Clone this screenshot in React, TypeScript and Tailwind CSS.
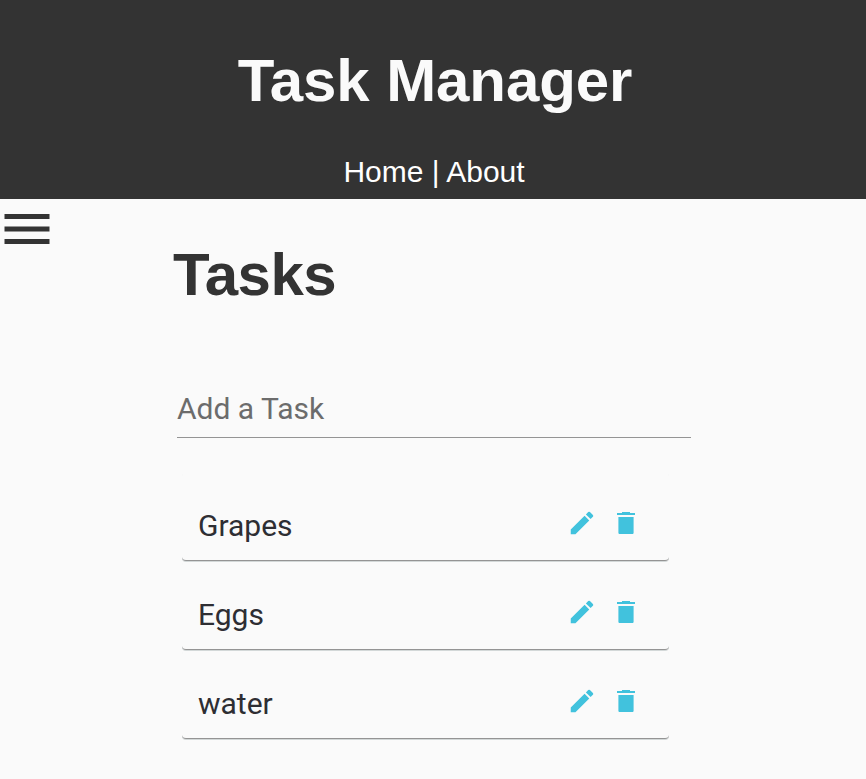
import { MdEdit, MdMenu } from "react-icons/md";

const tasks = ["Grapes", "Eggs", "water"];

function TrashIcon() {
  return (
    <svg viewBox="0 0 30 30" className="mr-[28px] mb-[5px] size-[30px]" fill="#41c2dd" aria-hidden="true">
      <path d="M11 4h8v1h5v2H6V5h5z" />
      <path d="M7.4 9h15.2v16.2l-.8.8H8.2l-.8-.8z" />
    </svg>
  );
}

export default function App() {
  return (
    <div className="h-[779px] overflow-hidden bg-[#fafafa] font-['Liberation_Sans',Arial,sans-serif] text-[#333]">
      <header className="h-[199px] bg-[#333] pt-[46px] pl-[2px] text-center text-[#fafafa]">
        <h1 className="pl-[2px] text-[60px] leading-[70px] font-bold tracking-[-0.1px]">Task Manager</h1>
        <nav className="mt-[38px] text-[30px] leading-[35px] text-white">Home | About</nav>
      </header>
      <div className="flex items-start">
        <button className="-ml-[3px] size-[60px] shrink-0" aria-label="Menu">
          <MdMenu className="size-[60px] text-[#333]" />
        </button>
        <main className="ml-[116px] w-[518px] pt-[41px]">
          <h2 className="text-[60px] leading-[70px] font-bold tracking-[-0.5px]">Tasks</h2>
          <div className="mt-[77px] ml-1 h-[51px] w-[514px] border-b border-[#949494] font-[Roboto,sans-serif] text-[30px] leading-[44px] text-[#6c6c6c]">Add a Task</div>
          <ul className="mt-[34px] ml-[9px] w-[487px] font-[Roboto,sans-serif] text-[30px] text-[#2e2e33]">
            {tasks.map((task) => (
              <li key={task} className="flex h-[89px] items-center rounded-[4px] border-b border-[#949494] pt-[18px] pl-4 shadow-[0_1px_0_#d3d8d8]">
                <span className="flex-1">{task}</span>
                <MdEdit className="mr-[14px] mb-[5px] size-[30px] text-[#41c2dd]" />
                <TrashIcon />
              </li>
            ))}
          </ul>
        </main>
      </div>
    </div>
  );
}
